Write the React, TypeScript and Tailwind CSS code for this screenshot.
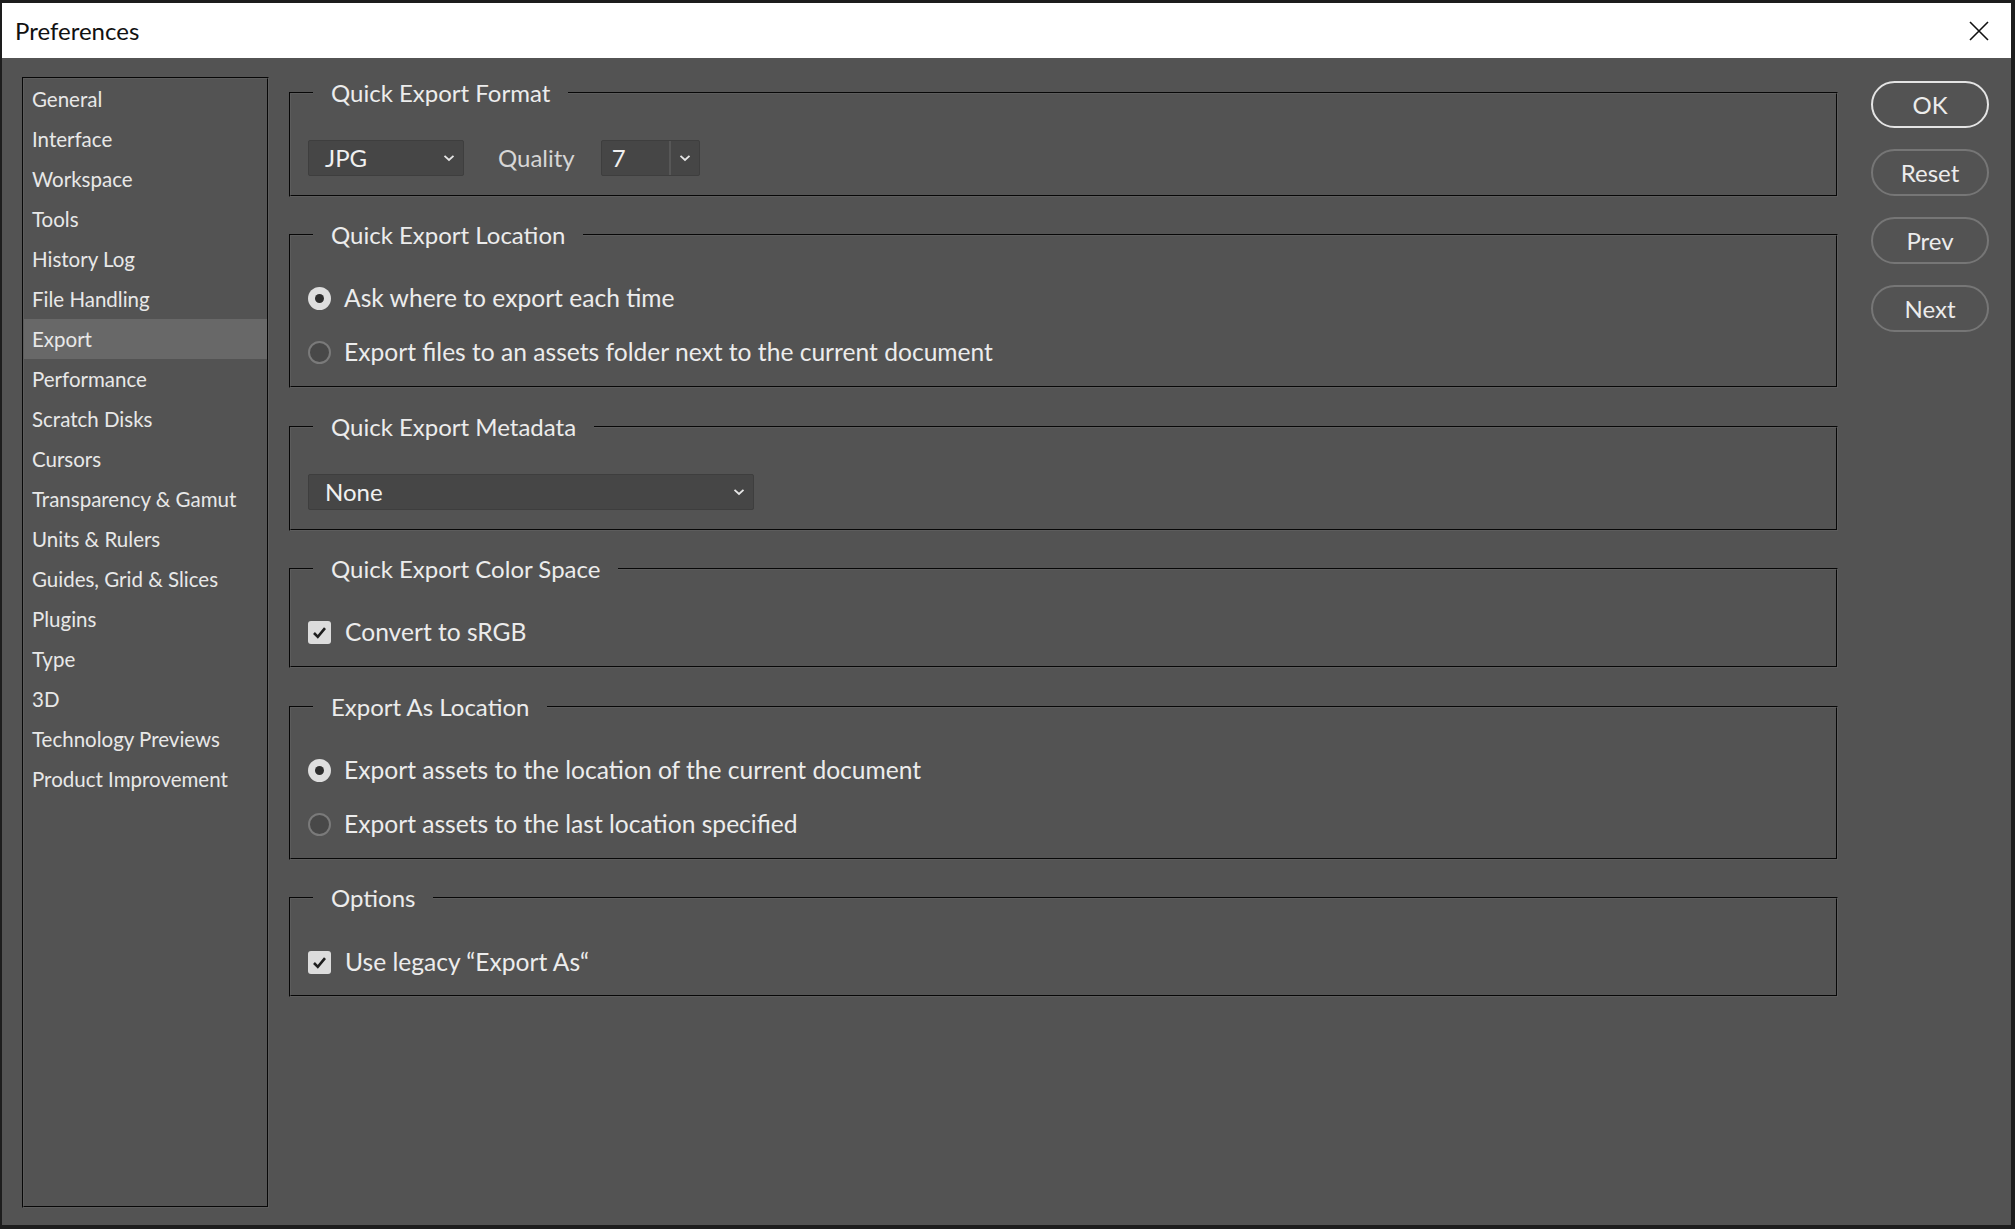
import React from "react";

const FONT = "font-['Lato','Liberation_Sans',sans-serif]";

const items = [
  "General",
  "Interface",
  "Workspace",
  "Tools",
  "History Log",
  "File Handling",
  "Export",
  "Performance",
  "Scratch Disks",
  "Cursors",
  "Transparency & Gamut",
  "Units & Rulers",
  "Guides, Grid & Slices",
  "Plugins",
  "Type",
  "3D",
  "Technology Previews",
  "Product Improvement",
];

function Chevron() {
  return (
    <svg width="12" height="8" viewBox="0 0 12 8" className="shrink-0">
      <path d="M1.5 1.8 L6 6 L10.5 1.8" fill="none" stroke="#e6e6e6" strokeWidth="1.8" />
    </svg>
  );
}

function Group({ title, children, className }: { title: string; children: React.ReactNode; className: string }) {
  return (
    <fieldset className={`border-2 [border-style:groove] border-[#5c5c5c] px-[17px] ${className}`}>
      <legend className="ml-[5px] px-[18px] text-[24px] leading-[30px] text-[#ececec]">{title}</legend>
      {children}
    </fieldset>
  );
}

function Radio({ checked, label }: { checked: boolean; label: string }) {
  return (
    <div className="flex h-[54px] items-center">
      {checked ? (
        <span className="flex h-[23px] w-[23px] items-center justify-center rounded-full bg-[#dedede]">
          <span className="h-[9px] w-[9px] rounded-full bg-[#2e2e2e]" />
        </span>
      ) : (
        <span className="h-[23px] w-[23px] rounded-full border-2 border-[#7a7a7a] bg-[#484848]" />
      )}
      <span className="ml-[13px] text-[24.6px] text-[#ececec]">{label}</span>
    </div>
  );
}

function Check({ label }: { label: string }) {
  return (
    <div className="flex h-[36px] items-center">
      <span className="flex h-[23px] w-[23px] items-center justify-center rounded-[3px] bg-[#dcdcdc]">
        <svg width="15" height="13" viewBox="0 0 15 13">
          <path d="M2 7 L5.8 10.8 L13 2.2" fill="none" stroke="#1f1f1f" strokeWidth="2.6" />
        </svg>
      </span>
      <span className="ml-[14px] text-[24.6px] text-[#ececec]">{label}</span>
    </div>
  );
}

function PillButton({ label, primary }: { label: string; primary?: boolean }) {
  return (
    <button
      className={`h-[47px] w-[118px] rounded-full border-2 text-[24px] text-[#ececec] ${
        primary ? "border-[#e4e4e4]" : "border-[#767676]"
      }`}
    >
      {label}
    </button>
  );
}

export default function App() {
  return (
    <div className={`${FONT} flex h-[1229px] w-[2015px] flex-col bg-[#1d1d1d] pb-[4px] pl-[2px] pr-[4px] pt-[3px]`}>
      {/* Title bar */}
      <div className="flex h-[55px] shrink-0 items-center justify-between bg-white pl-[13px] pr-[22px]">
        <span className="text-[24px] text-[#111]">Preferences</span>
        <svg width="20" height="20" viewBox="0 0 20 20">
          <path d="M1 1 L19 19 M19 1 L1 19" stroke="#111" strokeWidth="1.6" />
        </svg>
      </div>

      {/* Body */}
      <div className="flex flex-1 bg-[#535353] pb-[17px] pl-[20px] pr-[22px] pt-[19px]">
        {/* Sidebar */}
        <div className="w-[247px] shrink-0 border-2 [border-style:groove] border-[#5c5c5c]">
          {items.map((it) => (
            <div
              key={it}
              className={`flex h-[40px] items-center pl-[8px] text-[20.5px] text-[#e8e8e8] ${
                it === "Export" ? "bg-[#686868]" : ""
              }`}
            >
              {it}
            </div>
          ))}
        </div>

        {/* Content */}
        <div className="ml-[20px] flex w-[1549px] shrink-0 flex-col pt-[1px]">
          <Group title="Quick Export Format" className="pb-[19px] pt-[32px]">
            <div className="flex items-center">
              <div className="flex h-[36px] w-[156px] items-center justify-between rounded-[2px] border border-[#3e3e3e] bg-[#464646] pl-[16px] pr-[8px] text-[24px] text-[#f0f0f0]">
                <span>JPG</span>
                <Chevron />
              </div>
              <span className="ml-[34px] text-[24px] text-[#d6d6d6]">Quality</span>
              <div className="ml-[26px] flex h-[36px] w-[99px] items-center rounded-[2px] border border-[#3e3e3e] bg-[#464646] text-[24px] text-[#f0f0f0]">
                <span className="flex h-full w-[69px] items-center border-r-2 border-[#575757] pl-[10px]">7</span>
                <span className="flex flex-1 items-center justify-center">
                  <Chevron />
                </span>
              </div>
            </div>
          </Group>

          <Group title="Quick Export Location" className="mt-[23px] pb-[7px] pt-[21px]">
            <Radio checked label="Ask where to export each time" />
            <Radio checked={false} label="Export files to an assets folder next to the current document" />
          </Group>

          <Group title="Quick Export Metadata" className="mt-[24px] pb-[19px] pt-[32px]">
            <div className="flex h-[36px] w-[446px] items-center justify-between rounded-[2px] border border-[#3e3e3e] bg-[#464646] pl-[16px] pr-[8px] text-[24px] text-[#f0f0f0]">
              <span>None</span>
              <Chevron />
            </div>
          </Group>

          <Group title="Quick Export Color Space" className="mt-[23px] pb-[16px] pt-[30px]">
            <Check label="Convert to sRGB" />
          </Group>

          <Group title="Export As Location" className="mt-[24px] pb-[7px] pt-[21px]">
            <Radio checked label="Export assets to the location of the current document" />
            <Radio checked={false} label="Export assets to the last location specified" />
          </Group>

          <Group title="Options" className="mt-[23px] pb-[15px] pt-[31px]">
            <Check label="Use legacy “Export As“" />
          </Group>
        </div>

        {/* Buttons */}
        <div className="ml-[33px] flex w-[118px] shrink-0 flex-col gap-[21px] pt-[4px]">
          <PillButton label="OK" primary />
          <PillButton label="Reset" />
          <PillButton label="Prev" />
          <PillButton label="Next" />
        </div>
      </div>
    </div>
  );
}
